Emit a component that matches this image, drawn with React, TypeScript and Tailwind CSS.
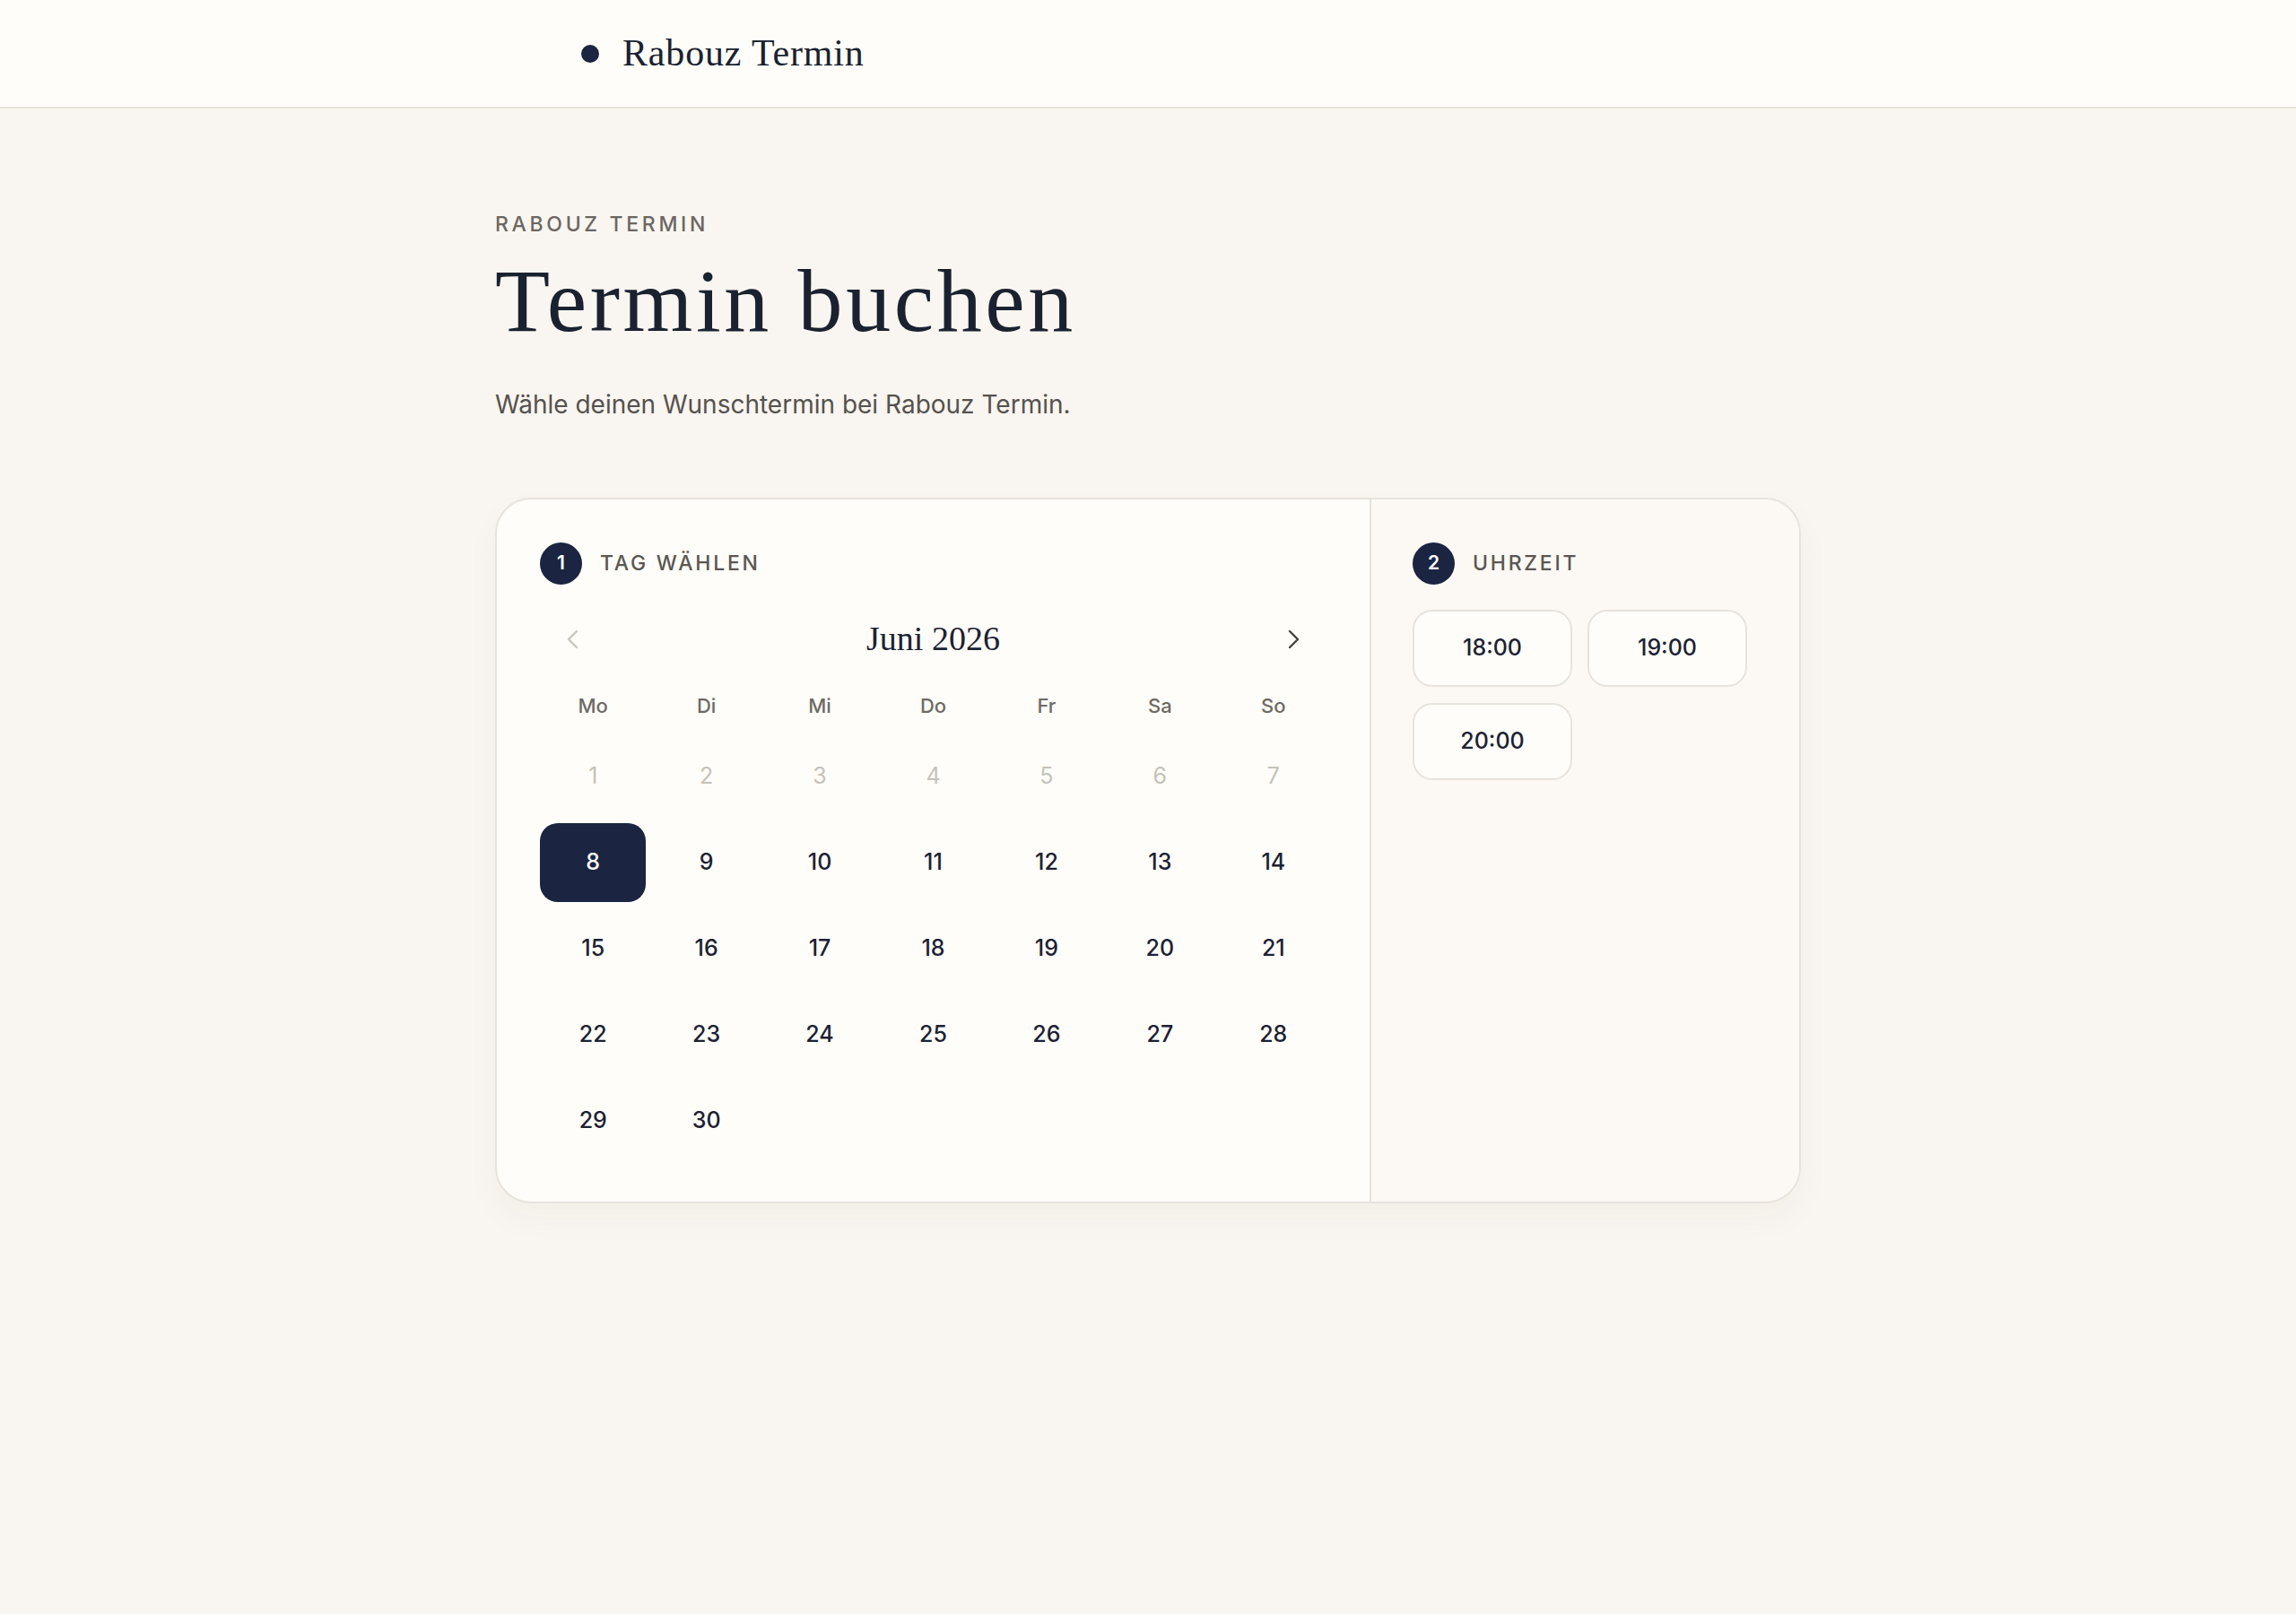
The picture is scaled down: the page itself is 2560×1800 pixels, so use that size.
import React, { useState } from "react";

const weekdays = ["Mo", "Di", "Mi", "Do", "Fr", "Sa", "So"];
const days = Array.from({ length: 30 }, (_, i) => i + 1);
const slots = ["18:00", "19:00", "20:00"];

function StepLabel({ n, label }: { n: number; label: string }) {
  return (
    <div className="flex h-[47px] items-center gap-[20px]">
      <span className="flex h-[47px] w-[47px] items-center justify-center rounded-full bg-[#1b2541] text-[21px] font-semibold text-white">
        {n}
      </span>
      <span className="text-[23px] font-medium uppercase tracking-[0.12em] text-[#5b5752]">{label}</span>
    </div>
  );
}

function Chevron({ dir, muted }: { dir: "left" | "right"; muted?: boolean }) {
  return (
    <svg width="18" height="24" viewBox="0 0 18 24" fill="none">
      <polyline
        points={dir === "left" ? "14,3 5,12 14,21" : "4,3 13,12 4,21"}
        stroke={muted ? "#c9c5be" : "#45423e"}
        strokeWidth="2.4"
        strokeLinecap="round"
        strokeLinejoin="round"
      />
    </svg>
  );
}

export default function App() {
  const [selectedDay, setSelectedDay] = useState(8);
  const [slot, setSlot] = useState<string | null>(null);

  return (
    <div className="min-h-screen bg-[#f9f5f0] font-['Inter','Noto_Sans',sans-serif] text-[#1c2233]">
      <header className="h-[121px] border-b-2 border-[#e7e3dc] bg-[#fffdf9]">
        <div className="mx-auto flex h-full w-[1264px] items-center gap-[26px]">
          <span className="h-[20px] w-[20px] rounded-full bg-[#1b2541]" />
          <span className="font-['Liberation_Serif',serif] text-[42px] tracking-[0.02em] text-[#1a2230]">Rabouz Termin</span>
        </div>
      </header>

      <main className="mx-auto w-[1456px] pt-[112px] pb-[200px]">
        <p className="text-[23px] font-medium uppercase tracking-[0.16em] text-[#6b6763]">Rabouz Termin</p>
        <h1 className="mt-[18px] font-['Liberation_Serif',serif] text-[100px] leading-none tracking-[0.036em] text-[#1a2230]">
          Termin buchen
        </h1>
        <p className="mt-[44px] text-[28px] text-[#55524e]">Wähle deinen Wunschtermin bei Rabouz Termin.</p>

        <section className="mt-[83px] flex overflow-hidden rounded-[40px] border-2 border-[#e7e3dc] bg-[#fffdf9] shadow-[0_16px_40px_rgba(70,50,30,0.035)]">
          <div className="w-[975px] border-r-2 border-[#e7e3dc] px-[48px] pt-[48px] pb-[46px]">
            <StepLabel n={1} label="Tag wählen" />

            <div className="mt-[32px] flex h-[58px] items-center justify-between">
              <button className="flex h-[58px] w-[72px] items-center justify-center">
                <Chevron dir="left" muted />
              </button>
              <span className="font-['Liberation_Serif',serif] text-[38px] text-[#1c2233]">Juni 2026</span>
              <button className="flex h-[58px] w-[72px] items-center justify-center">
                <Chevron dir="right" />
              </button>
            </div>

            <div className="mt-[29px] grid grid-cols-7 gap-[8px]">
              {weekdays.map((d) => (
                <div key={d} className="flex h-[34px] items-center justify-center text-[22px] font-medium text-[#6e6a64]">
                  {d}
                </div>
              ))}
            </div>

            <div className="mt-[17px] grid grid-cols-7 gap-[8px]">
              {days.map((d) => {
                const past = d < 8;
                const active = d === selectedDay;
                return (
                  <button
                    key={d}
                    disabled={past}
                    onClick={() => setSelectedDay(d)}
                    className={
                      active
                        ? "flex h-[88px] items-center justify-center rounded-[20px] bg-[#1b2541] text-[25px] font-medium text-white"
                        : past
                          ? "flex h-[88px] items-center justify-center rounded-[20px] text-[25px] text-[#c6c1ba]"
                          : "flex h-[88px] items-center justify-center rounded-[20px] text-[25px] font-medium text-[#1c2233]"
                    }
                  >
                    {d}
                  </button>
                );
              })}
            </div>
          </div>

          <div className="flex-1 bg-[#fcf8f4] px-[46px] pt-[48px]">
            <StepLabel n={2} label="Uhrzeit" />
            <div className="mt-[28px] grid grid-cols-[repeat(2,178px)] gap-x-[17px] gap-y-[18px]">
              {slots.map((s) => (
                <button
                  key={s}
                  onClick={() => setSlot(s)}
                  className={
                    slot === s
                      ? "flex h-[86px] items-center justify-center rounded-[22px] border-2 border-[#1b2541] bg-[#1b2541] text-[25px] font-medium text-white"
                      : "flex h-[86px] items-center justify-center rounded-[22px] border-2 border-[#e7e3dc] bg-[#fffdf9] text-[25px] font-medium text-[#1c2233]"
                  }
                >
                  {s}
                </button>
              ))}
            </div>
          </div>
        </section>
      </main>
    </div>
  );
}
